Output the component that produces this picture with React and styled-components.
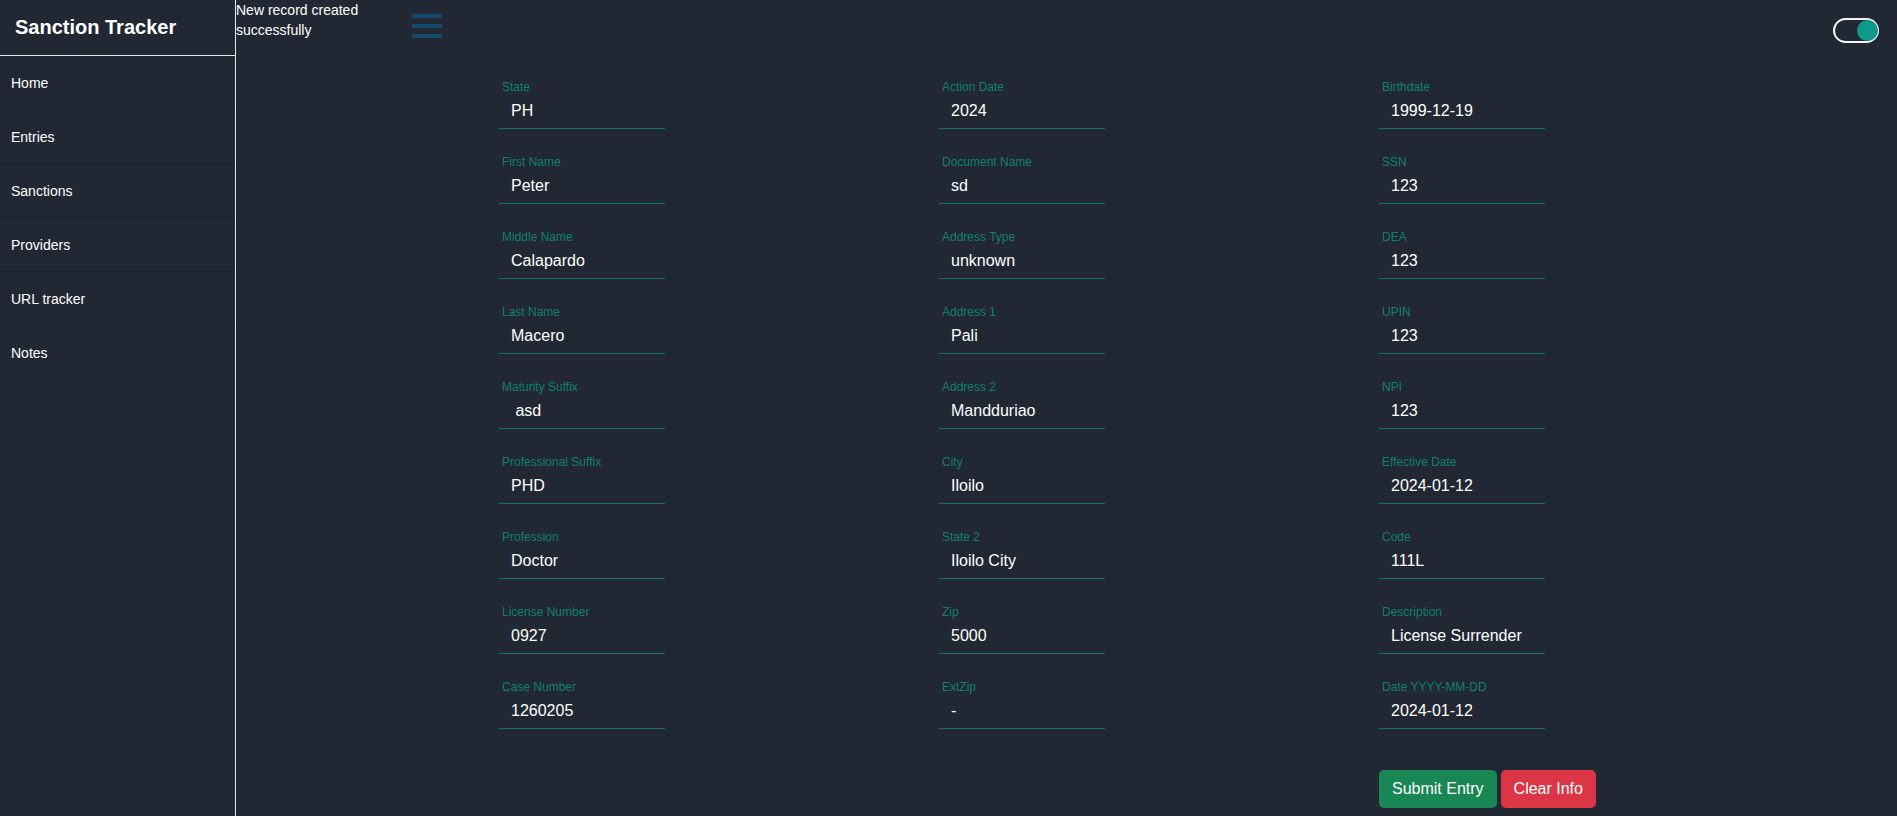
import React from 'react';
import styled, { createGlobalStyle } from 'styled-components';

const GlobalStyle = createGlobalStyle`
  html, body {
    margin: 0;
    padding: 0;
    background: #212833;
    font-family: "Liberation Sans", Arial, sans-serif;
    color: #ffffff;
  }
  * { box-sizing: border-box; }
`;

const Layout = styled.div`
  display: flex;
  min-height: 816px;
  background: #212833;
`;

const Sidebar = styled.aside`
  width: 236px;
  flex-shrink: 0;
  border-right: 1px solid #e6e6e6;
  display: flex;
  flex-direction: column;
`;

const Brand = styled.div`
  height: 56px;
  padding: 0 15px;
  display: flex;
  align-items: center;
  font-size: 20px;
  font-weight: 700;
  border-bottom: 1px solid #e6e6e6;
`;

const NavItem = styled.a`
  display: flex;
  align-items: center;
  height: 54px;
  padding: 0 11px;
  font-size: 14px;
  color: #ffffff;
  border-bottom: 1px solid #1b2029;
  cursor: pointer;

  &:last-child {
    border-bottom: none;
  }
`;

const Main = styled.main`
  flex: 1;
  display: flex;
  flex-direction: column;
`;

const TopBar = styled.div`
  display: flex;
  align-items: flex-start;
  padding-right: 18px;
`;

const Toast = styled.div`
  width: 130px;
  font-size: 14px;
  line-height: 20px;
`;

const Hamburger = styled.button`
  margin: 14px 0 0 46px;
  padding: 0;
  width: 30px;
  display: flex;
  flex-direction: column;
  gap: 6px;
  background: none;
  border: none;
  cursor: pointer;

  span {
    display: block;
    height: 4px;
    background: #134a6b;
  }
`;

const Toggle = styled.div`
  margin: 18px 0 0 auto;
  width: 46px;
  height: 25px;
  border: 2px solid #f2f2f2;
  border-radius: 13px;
  display: flex;
  align-items: center;
  justify-content: flex-end;
`;

const Knob = styled.span`
  width: 21px;
  height: 21px;
  margin-right: -1px;
  border-radius: 50%;
  background: #0e9a8a;
`;

const Form = styled.form`
  padding: 37px 0 0 263px;
`;

const Grid = styled.div`
  display: grid;
  grid-template-columns: repeat(3, 440px);
  row-gap: 26px;
`;

const Field = styled.label`
  display: flex;
  flex-direction: column;
  width: 166px;
`;

const Label = styled.span`
  font-size: 12px;
  line-height: 14px;
  color: #0f7f72;
  padding-left: 3px;
`;

const Input = styled.input`
  height: 35px;
  padding: 0 12px;
  margin: 0;
  background: transparent;
  border: none;
  border-bottom: 1px solid #0d7268;
  color: #ffffff;
  font-family: "Liberation Sans", Arial, sans-serif;
  font-size: 16px;
  outline: none;
`;

const Actions = styled.div`
  display: flex;
  gap: 4px;
  margin: 41px 0 0 880px;
`;

const Button = styled.button`
  height: 38px;
  padding: 0 13px;
  border: none;
  border-radius: 5px;
  font-family: "Liberation Sans", Arial, sans-serif;
  font-size: 16px;
  color: #ffffff;
  background: ${p => (p.$variant === 'danger' ? '#dc3545' : '#198754')};
  cursor: pointer;
`;

const columns = [
  [
    ['State', 'PH'],
    ['First Name', 'Peter'],
    ['Middle Name', 'Calapardo'],
    ['Last Name', 'Macero'],
    ['Maturity Suffix', ' asd'],
    ['Professional Suffix', 'PHD'],
    ['Profession', 'Doctor'],
    ['License Number', '0927'],
    ['Case Number', '1260205'],
  ],
  [
    ['Action Date', '2024'],
    ['Document Name', 'sd'],
    ['Address Type', 'unknown'],
    ['Address 1', 'Pali'],
    ['Address 2', 'Mandduriao'],
    ['City', 'Iloilo'],
    ['State 2', 'Iloilo City'],
    ['Zip', '5000'],
    ['ExtZip', '-'],
  ],
  [
    ['Birthdate', '1999-12-19'],
    ['SSN', '123'],
    ['DEA', '123'],
    ['UPIN', '123'],
    ['NPI', '123'],
    ['Effective Date', '2024-01-12'],
    ['Code', '111L'],
    ['Description', 'License Surrender'],
    ['Date YYYY-MM-DD', '2024-01-12'],
  ],
];

const navLinks = ['Home', 'Entries', 'Sanctions', 'Providers', 'URL tracker', 'Notes'];

export default function App() {
  const rows = columns[0].map((_, i) => columns.map(col => col[i]));

  return (
    <>
      <GlobalStyle />
      <Layout>
        <Sidebar>
          <Brand>Sanction Tracker</Brand>
          {navLinks.map(link => (
            <NavItem key={link}>{link}</NavItem>
          ))}
        </Sidebar>
        <Main>
          <TopBar>
            <Toast>New record created successfully</Toast>
            <Hamburger type="button" aria-label="menu">
              <span />
              <span />
              <span />
            </Hamburger>
            <Toggle>
              <Knob />
            </Toggle>
          </TopBar>
          <Form onSubmit={e => e.preventDefault()}>
            <Grid>
              {rows.flat().map(([label, value]) => (
                <Field key={label}>
                  <Label>{label}</Label>
                  <Input defaultValue={value} />
                </Field>
              ))}
            </Grid>
            <Actions>
              <Button type="submit">Submit Entry</Button>
              <Button type="button" $variant="danger">Clear Info</Button>
            </Actions>
          </Form>
        </Main>
      </Layout>
    </>
  );
}
